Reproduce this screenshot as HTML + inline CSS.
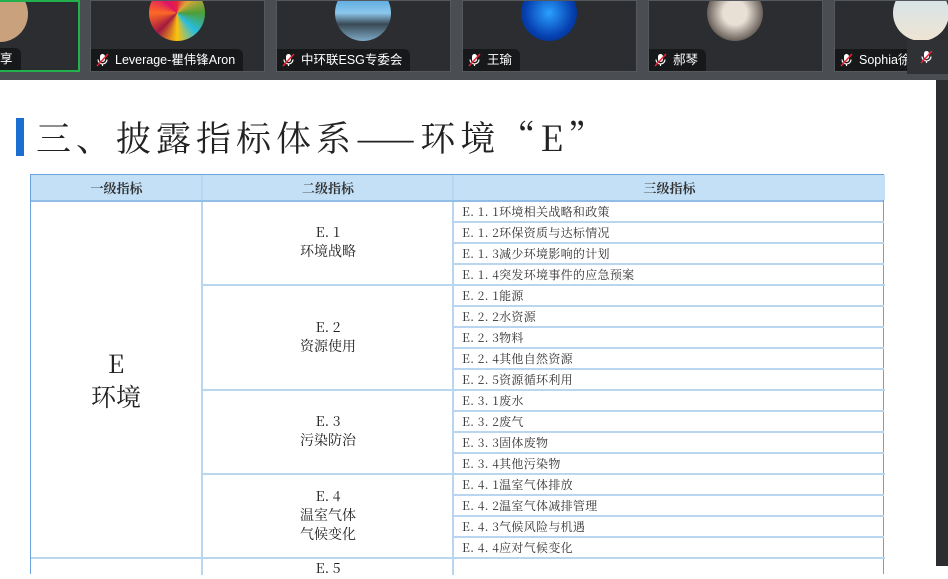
<!DOCTYPE html>
<html><head><meta charset="utf-8"><style>
*{margin:0;padding:0;box-sizing:border-box}
body{width:948px;height:566px;overflow:hidden;background:#fff;position:relative;font-family:"Liberation Serif","Noto Serif CJK SC",serif}
.top{position:absolute;left:0;top:0;width:948px;height:80px;background:#4a4d52}
.tile{position:absolute;top:0;height:72px;background:#2b2d31;border:1px solid #55585d;overflow:hidden}
.av{position:absolute;top:-16px;width:56px;height:56px;border-radius:50%}
.nm{position:absolute;left:0;bottom:0;height:22px;background:#17181a;color:#fff;font:12.5px "Liberation Sans","Noto Sans CJK SC",sans-serif;line-height:22px;padding:0 8px 0 24px;border-radius:0 6px 0 0;white-space:nowrap}
.nm svg{position:absolute;left:5px;top:4px}
.strip{position:absolute;left:936px;top:80px;width:12px;height:486px;background:#2b2d31}
.bar{position:absolute;left:16px;top:118px;width:8px;height:38px;background:#1a6fd0}
.title{position:absolute;left:36px;top:112px;font-size:35px;color:#222;letter-spacing:5px;font-family:"Noto Serif CJK SC",serif;white-space:nowrap}
.tbl{position:absolute;left:30px;top:174px;width:854px;height:400px;border:1.5px solid #6aa3dc;border-bottom:none}
.hl{position:absolute;left:0;width:100%;height:1.5px;background:#b8d6f0}
.vl{position:absolute;top:0;width:1.5px;height:400px;background:#b8d6f0}
.hd{position:absolute;top:0;height:25px;background:#c3e0f7;font-size:13px;font-weight:bold;text-align:center;line-height:25px;color:#333;font-family:"Noto Serif CJK SC",serif}
.c3{position:absolute;left:431px;font-size:12px;color:#333;font-family:"Noto Serif CJK SC",serif;white-space:nowrap;letter-spacing:0.3px}
.c2{position:absolute;left:172px;width:250px;display:flex;flex-direction:column;justify-content:center;align-items:center;text-align:center;font-size:14px;color:#222;line-height:19px;font-family:"Noto Serif CJK SC",serif}
</style></head><body>
<svg width="0" height="0" style="position:absolute"><defs><g id="m"><rect x="4" y="1" width="5" height="8" rx="2.5" fill="#fff"/><path d="M2 6.5a4.5 4.5 0 0 0 9 0M6.5 11v2" stroke="#fff" fill="none" stroke-width="1.2"/><path d="M1 13L12 1" stroke="#e23" stroke-width="1.5"/></g></defs></svg>
<div class="top">
 <div class="tile" style="left:-10px;width:90px;border:2px solid #21b04b"><div class="av" style="left:-20px;background:#c9a27d"></div><div class="nm" style="padding-left:8px">享</div></div>
 <div class="tile" style="left:90px;width:175px"><div class="av" style="left:58px;background:conic-gradient(#e5243b,#dda63a,#4c9f38,#26bde2,#fcc30b,#a21942,#fd6925,#dd1367,#e5243b)"></div><div class="nm"><svg width="13" height="14"><use href="#m"/></svg>Leverage-瞿伟锋Aron</div></div>
 <div class="tile" style="left:276px;width:175px"><div class="av" style="left:58px;background:linear-gradient(#2c8fd6,#8cc7ec 50%,#3a4a56 70%,#7da9c7)"></div><div class="nm"><svg width="13" height="14"><use href="#m"/></svg>中环联ESG专委会</div></div>
 <div class="tile" style="left:462px;width:175px"><div class="av" style="left:58px;background:radial-gradient(#2aa0ff,#0640b0 60%,#022060)"></div><div class="nm"><svg width="13" height="14"><use href="#m"/></svg>王瑜</div></div>
 <div class="tile" style="left:648px;width:175px"><div class="av" style="left:58px;background:radial-gradient(#e8e0d5 30%,#6a625a 70%,#b8aea3)"></div><div class="nm"><svg width="13" height="14"><use href="#m"/></svg>郝琴</div></div>
 <div class="tile" style="left:834px;width:120px"><div class="av" style="left:58px;background:linear-gradient(#cfe3f0,#efe4d2)"></div><div class="nm"><svg width="13" height="14"><use href="#m"/></svg>Sophia徐</div></div>
 <div style="position:absolute;left:907px;top:40px;width:41px;height:34px;background:#2f3135"><svg width="13" height="14" style="position:absolute;left:13px;top:10px"><use href="#m"/></svg></div>
</div>
<div class="strip"></div>
<div class="bar"></div>
<div class="title">三、披露指标体系——环境“E”</div>
<div class="tbl">
 <div class="hd" style="left:0;width:171px">一级指标</div>
 <div class="hd" style="left:172px;width:250px">二级指标</div>
 <div class="hd" style="left:423px;width:431px">三级指标</div>
 <div class="vl" style="left:170px"></div>
 <div class="vl" style="left:421px"></div>
 <div class="hl" style="top:25px;background:#8fbde6"></div>
 <div class="hl" style="top:46px;left:421px;width:432px"></div>
 <div class="hl" style="top:67px;left:421px;width:432px"></div>
 <div class="hl" style="top:88px;left:421px;width:432px"></div>
 <div class="hl" style="top:109px;left:170px;width:684px"></div>
 <div class="hl" style="top:130px;left:421px;width:432px"></div>
 <div class="hl" style="top:151px;left:421px;width:432px"></div>
 <div class="hl" style="top:172px;left:421px;width:432px"></div>
 <div class="hl" style="top:193px;left:421px;width:432px"></div>
 <div class="hl" style="top:214px;left:170px;width:684px"></div>
 <div class="hl" style="top:235px;left:421px;width:432px"></div>
 <div class="hl" style="top:256px;left:421px;width:432px"></div>
 <div class="hl" style="top:277px;left:421px;width:432px"></div>
 <div class="hl" style="top:298px;left:170px;width:684px"></div>
 <div class="hl" style="top:319px;left:421px;width:432px"></div>
 <div class="hl" style="top:340px;left:421px;width:432px"></div>
 <div class="hl" style="top:361px;left:421px;width:432px"></div>
 <div class="hl" style="top:382px;left:0;width:854px"></div>
 <div style="position:absolute;left:0;width:170px;top:172px;text-align:center;font-size:25px;line-height:33px;color:#222;font-family:'Noto Serif CJK SC',serif">E<br>环境</div>
 <div class="c2" style="top:25px;height:84px">E. 1<br>环境战略</div>
 <div class="c2" style="top:109px;height:105px">E. 2<br>资源使用</div>
 <div class="c2" style="top:214px;height:84px">E. 3<br>污染防治</div>
 <div class="c2" style="top:298px;height:84px">E. 4<br>温室气体<br>气候变化</div>
 <div class="c2" style="top:384px;height:20px;justify-content:flex-start">E. 5</div>
 <div class="c3" style="top:28px">E. 1. 1环境相关战略和政策</div>
 <div class="c3" style="top:49px">E. 1. 2环保资质与达标情况</div>
 <div class="c3" style="top:70px">E. 1. 3减少环境影响的计划</div>
 <div class="c3" style="top:91px">E. 1. 4突发环境事件的应急预案</div>
 <div class="c3" style="top:112px">E. 2. 1能源</div>
 <div class="c3" style="top:133px">E. 2. 2水资源</div>
 <div class="c3" style="top:154px">E. 2. 3物料</div>
 <div class="c3" style="top:175px">E. 2. 4其他自然资源</div>
 <div class="c3" style="top:196px">E. 2. 5资源循环利用</div>
 <div class="c3" style="top:217px">E. 3. 1废水</div>
 <div class="c3" style="top:238px">E. 3. 2废气</div>
 <div class="c3" style="top:259px">E. 3. 3固体废物</div>
 <div class="c3" style="top:280px">E. 3. 4其他污染物</div>
 <div class="c3" style="top:301px">E. 4. 1温室气体排放</div>
 <div class="c3" style="top:322px">E. 4. 2温室气体减排管理</div>
 <div class="c3" style="top:343px">E. 4. 3气候风险与机遇</div>
 <div class="c3" style="top:364px">E. 4. 4应对气候变化</div>
</div>
</body></html>
